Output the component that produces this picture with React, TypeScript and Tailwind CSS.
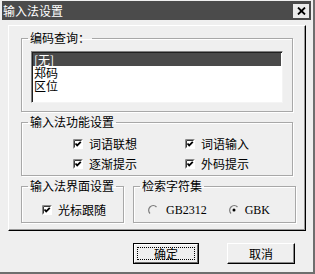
import type { ReactNode } from 'react';

const cjk = { fontFamily: '"Noto Sans CJK SC", "Noto Sans", sans-serif' };
const latin = { fontFamily: '"Liberation Serif", "Noto Sans CJK SC", serif' };

function CheckBox() {
  return (
    <svg width="10" height="10" viewBox="0 0 10 10" className="shrink-0">
      <rect x="0" y="0" width="10" height="10" fill="#ffffff" />
      <path d="M0.5 9.5V0.5H9.5" stroke="#8a8a8a" fill="none" />
      <path d="M1.5 8.5V1.5H8.5" stroke="#3a3a3a" fill="none" />
      <path d="M2.5 4.5L4.2 6.5L7.8 2.8" stroke="#000" strokeWidth="1.8" fill="none" />
    </svg>
  );
}

function Radio({ checked }: { checked?: boolean }) {
  return (
    <svg width="10" height="10" viewBox="0 0 10 10" className="shrink-0">
      <path d="M2 8.5A4.3 4.3 0 0 1 8.5 2" stroke="#7a7a7a" strokeWidth="1.2" fill="none" />
      {checked && <circle cx="5" cy="5" r="1.5" fill="#000" />}
    </svg>
  );
}

function Group({ title, className, inner, children }: { title: string; className: string; inner: string; children: ReactNode }) {
  return (
    <fieldset
      className={`p-0 border border-[#a8a8a8] shadow-[inset_1px_1px_0_#ffffff,1px_1px_0_#ffffff] ${className}`}
    >
      <legend className="ml-[6px] px-[2px] whitespace-nowrap text-[12px] leading-[12px] text-black" style={cjk}>
        {title}
      </legend>
      <div className={inner}>{children}</div>
    </fieldset>
  );
}

function Check({ label }: { label: string }) {
  return (
    <div className="flex items-center h-[12px] gap-[6px]">
      <CheckBox />
      <span className="whitespace-nowrap text-[12px] leading-[12px] text-black" style={cjk}>{label}</span>
    </div>
  );
}

export default function App() {
  return (
    <div className="w-[315px] h-[274px] bg-[#efefef] border-r-2 border-b-2 border-[#6e6e6e] flex flex-col">
      <div className="mx-[2px] mt-[1px] h-[19px] bg-[#4b4b4b] flex items-center justify-between">
        <span className="ml-[1px] text-white text-[12px] leading-[12px]" style={cjk}>输入法设置</span>
        <div className="mr-[2px] w-[16px] h-[14px] bg-[#ececec] flex items-center justify-center">
          <svg width="9" height="8" viewBox="0 0 9 8">
            <path d="M1 0.5L8 7.5M8 0.5L1 7.5" stroke="#000" strokeWidth="1.8" />
          </svg>
        </div>
      </div>

      <div className="ml-[8px] mt-[5px] w-[298px] h-[206px] border-t border-l border-white border-r border-b border-r-black border-b-black shadow-[inset_-1px_-1px_0_#9a9a9a] pl-[12px] pt-[6px]">
        <Group title="编码查询：" className="w-[272px]" inner="px-[9px] pt-[7px] pb-[8px]">
          <div className="h-[52px] bg-white border-t border-l border-[#808080] border-r border-b border-r-[#f4f4f4] border-b-[#f4f4f4] shadow-[inset_1px_1px_0_#202020] pl-[1px] pt-[1px]">
            {['[无]', '郑码', '区位'].map((t, i) => (
              <div
                key={t}
                className={`h-[13px] pl-[1px] text-[12px] leading-[13px] ${i === 0 ? 'bg-[#4a4a4a] text-white mr-[1px]' : 'text-black'}`}
                style={cjk}
              >
                {t}
              </div>
            ))}
          </div>
        </Group>

        <Group title="输入法功能设置" className="mt-[4px] w-[272px]" inner="pl-[51px] pt-[10px] pb-[5px]">
          <div className="grid grid-cols-[112px_auto] gap-y-[8px]">
            <Check label="词语联想" />
            <Check label="词语输入" />
            <Check label="逐渐提示" />
            <Check label="外码提示" />
          </div>
        </Group>

        <div className="mt-[4px] flex gap-[9px]">
          <Group title="输入法界面设置" className="w-[103px]" inner="pl-[20px] pt-[12px] pb-[6px]">
            <Check label="光标跟随" />
          </Group>
          <Group title="检索字符集" className="w-[163px]" inner="pl-[14px] pt-[12px] pb-[6px]">
            <div className="flex items-center h-[12px]">
              <Radio />
              <span className="ml-[8px] text-[12px] leading-[12px] text-black" style={latin}>GB2312</span>
              <div className="ml-[22px]">
                <Radio checked />
              </div>
              <span className="ml-[6px] text-[12px] leading-[12px] text-black" style={latin}>GBK</span>
            </div>
          </Group>
        </div>
      </div>

      <div className="mt-[12px] ml-[133px] flex gap-[28px]">
        <button className="w-[66px] h-[21px] border border-black bg-[#efefef] p-0">
          <div className="w-full h-full border-t border-l border-white border-r border-b border-r-[#6a6a6a] border-b-[#6a6a6a] p-[2px]">
            <div
              className="w-full h-full border border-dotted border-black flex items-center justify-center text-[12px] leading-[12px] text-black"
              style={cjk}
            >
              确定
            </div>
          </div>
        </button>
        <button
          className="w-[68px] h-[21px] bg-[#efefef] border-t border-l border-white border-r border-b border-r-black border-b-black shadow-[inset_-1px_-1px_0_#8a8a8a] flex items-center justify-center text-[12px] leading-[12px] text-black p-0"
          style={cjk}
        >
          取消
        </button>
      </div>
    </div>
  );
}
